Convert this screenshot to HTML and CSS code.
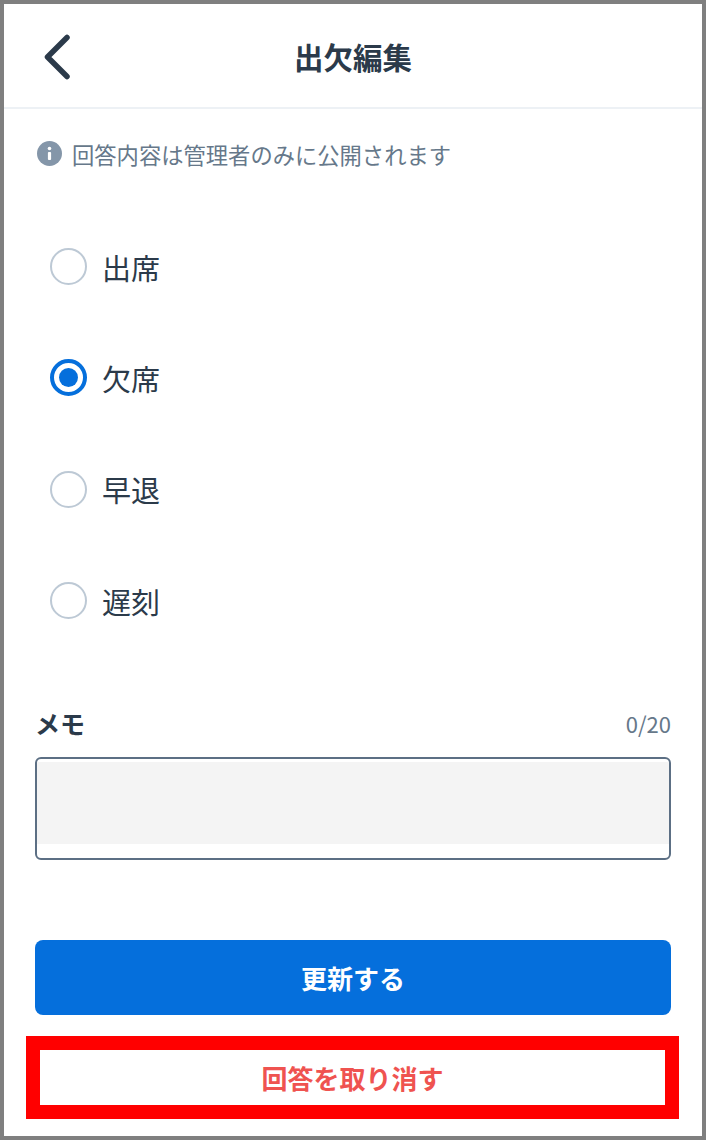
FILE: index.html
```html
<!DOCTYPE html>
<html lang="ja">

<head>
    <meta charset="UTF-8">
    <meta name="viewport" content="width=device-width, initial-scale=1.0">
    <title>出欠編集</title>
    <link rel="stylesheet" href="styles.css">
</head>

<body>
    <div class="frame">
        <header class="head">
            <a class="back" href="javascript:;">
                <svg width="30" height="46" viewBox="0 0 30 46">
                    <path d="M25 3.5 L5.5 23 L25 42.5" fill="none" stroke="#2b3a4a" stroke-width="5.5" stroke-linecap="round" stroke-linejoin="round" />
                </svg>
            </a>
            <h1 class="title">出欠編集</h1>
        </header>

        <p class="notice">
            <svg class="notice_icon" width="25" height="25" viewBox="0 0 25 25">
                <circle cx="12.5" cy="12.5" r="12.5" fill="#8496a9" />
                <circle cx="12.5" cy="7.5" r="1.8" fill="#fff" />
                <rect x="10.9" y="11" width="3.2" height="8" rx="1" fill="#fff" />
            </svg>
            回答内容は管理者のみに公開されます
        </p>

        <div class="options">
            <div class="option"><span class="radio"></span>出席</div>
            <div class="option"><span class="radio checked"></span>欠席</div>
            <div class="option"><span class="radio"></span>早退</div>
            <div class="option"><span class="radio"></span>遅刻</div>
        </div>

        <div class="memo_head">
            <span class="memo_label">メモ</span>
            <span class="memo_count">0/20</span>
        </div>
        <div class="memo_box">
            <div class="memo_fill"></div>
        </div>

        <a class="btn_update" href="javascript:;">更新する</a>
        <div class="mark">
            <a class="btn_cancel" href="javascript:;">回答を取り消す</a>
        </div>
    </div>
</body>

</html>
```

FILE: styles.css
```css
* {
    margin: 0;
    padding: 0;
    box-sizing: border-box;
}

body {
    font-family: "Noto Sans CJK JP", "Noto Sans", sans-serif;
    color: #2b3a4a;
    background: #fff;
}

a {
    text-decoration: none;
}

.frame {
    width: 706px;
    height: 1140px;
    border: 4px solid #7f7f7f;
    overflow: hidden;
}

.head {
    height: 105px;
    border-bottom: 2px solid #edf1f5;
    display: flex;
    align-items: center;
    justify-content: center;
    position: relative;
}

.back {
    position: absolute;
    left: 38px;
    top: 30px;
    display: block;
    height: 46px;
}

.title {
    font-size: 29.5px;
    font-weight: 700;
    line-height: 40px;
}

.notice {
    display: flex;
    align-items: center;
    gap: 10px;
    margin: 31px 0 0 33px;
    height: 28px;
    font-size: 22.3px;
    line-height: 28px;
    color: #66788a;
}

.notice_icon {
    flex: none;
    margin-top: -1px;
}

.options {
    margin-top: 43px;
    padding-left: 46px;
}

.option {
    height: 111.3px;
    display: flex;
    align-items: center;
    gap: 15px;
    font-size: 29px;
}

.radio {
    width: 37px;
    height: 37px;
    border-radius: 50%;
    border: 2px solid #bdc9d5;
    flex: none;
}

.checked {
    border: 4px solid #056fdc;
    display: flex;
    align-items: center;
    justify-content: center;
}

.checked::after {
    content: "";
    width: 19px;
    height: 19px;
    border-radius: 50%;
    background: #056fdc;
}

.memo_head {
    margin: 47px 31px 0;
    height: 40px;
    display: flex;
    justify-content: space-between;
    align-items: center;
}

.memo_label {
    font-size: 25px;
    font-weight: 700;
}

.memo_count {
    font-size: 22px;
    color: #66788a;
}

.memo_box {
    margin: 14px 31px 0;
    height: 103px;
    border: 2px solid #5c6f84;
    border-radius: 6px;
    padding-top: 3px;
    background: #fff;
}

.memo_fill {
    height: 82px;
    background: #f4f4f4;
}

.btn_update {
    display: flex;
    align-items: center;
    justify-content: center;
    margin: 80px 31px 0;
    height: 75px;
    border-radius: 8px;
    background: #056fdc;
    color: #fff;
    font-size: 26px;
    font-weight: 700;
}

.mark {
    margin: 21px 23px 0 22px;
    height: 83px;
    border: 14px solid #ff0000;
}

.btn_cancel {
    display: flex;
    align-items: center;
    justify-content: center;
    height: 100%;
    color: #ef5350;
    font-size: 26px;
    font-weight: 700;
}
```
